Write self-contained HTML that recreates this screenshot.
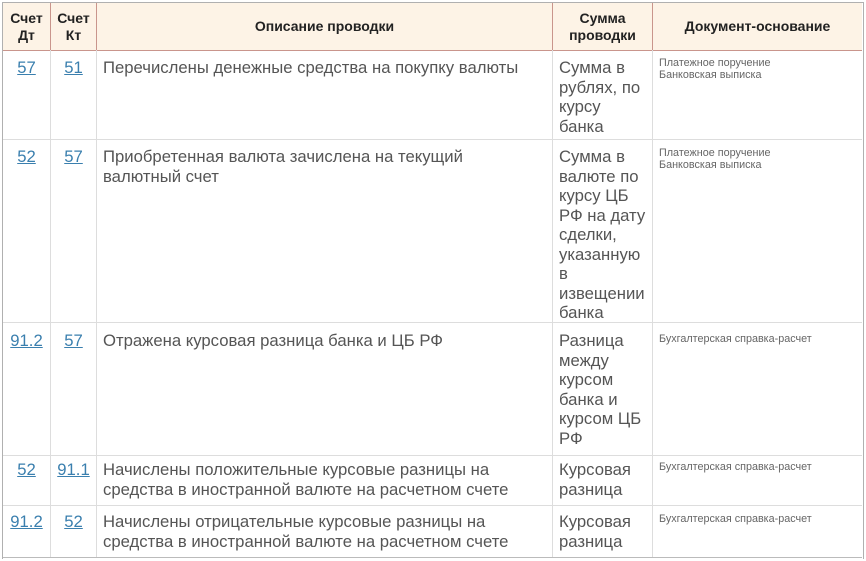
<!DOCTYPE html>
<html><head><meta charset="utf-8"><style>
body{margin:0;width:866px;height:561px;background:#fff;overflow:hidden;font-family:"Liberation Sans",Arial,sans-serif;position:relative}
.frame{position:absolute;left:2px;top:2px;width:860px;height:556px;border:1px solid #b0b0b0;border-bottom:none}
.hd{position:absolute;left:3px;top:3px;width:859px;height:47px;background:#fdf3e6;border-bottom:1px solid #c9958c}
.v{position:absolute;width:1px;background:#ddd}
.vh{position:absolute;top:3px;height:47px;width:1px;background:#c9958c}
.h{position:absolute;left:3px;width:859px;height:1px;background:#ddd}
.t{position:absolute;font-size:16.7px;line-height:19.5px;color:#555;white-space:nowrap}
.th{position:absolute;font-size:14px;font-weight:bold;color:#222;text-align:center;line-height:17px}
a{color:#3a7fae;text-decoration:underline}
.c{text-align:center}
.d{position:absolute;font-size:10.8px;line-height:12px;color:#666}
</style></head><body>
<div class="frame"></div>
<div class="hd"></div>
<div class="vh" style="left:50px"></div><div class="vh" style="left:96px"></div><div class="vh" style="left:552px"></div><div class="vh" style="left:652px"></div>
<div class="v" style="left:50px;top:50px;height:507px"></div>
<div class="v" style="left:96px;top:50px;height:507px"></div>
<div class="v" style="left:552px;top:50px;height:507px"></div>
<div class="v" style="left:652px;top:50px;height:507px"></div>
<div class="h" style="top:139px"></div><div class="h" style="top:322px"></div><div class="h" style="top:455px"></div><div class="h" style="top:505px"></div><div class="h" style="top:557px;background:#bbb"></div>
<div class="th" style="left:3px;width:47px;top:10px">Счет<br>Дт</div>
<div class="th" style="left:51px;width:45px;top:10px">Счет<br>Кт</div>
<div class="th" style="left:97px;width:455px;top:18px">Описание проводки</div>
<div class="th" style="left:553px;width:99px;top:10px">Сумма<br>проводки</div>
<div class="th" style="left:653px;width:209px;top:18px">Документ-основание</div>

<div class="t c" style="left:3px;width:47px;top:58px"><a>57</a></div>
<div class="t c" style="left:51px;width:45px;top:58px"><a>51</a></div>
<div class="t" style="left:103px;top:58px">Перечислены денежные средства на покупку валюты</div>
<div class="t" style="left:559px;top:58px">Сумма в<br>рублях, по<br>курсу<br>банка</div>
<div class="d" style="left:659px;top:57px">Платежное поручение<br>Банковская выписка</div>

<div class="t c" style="left:3px;width:47px;top:147px"><a>52</a></div>
<div class="t c" style="left:51px;width:45px;top:147px"><a>57</a></div>
<div class="t" style="left:103px;top:147px">Приобретенная валюта зачислена на текущий<br>валютный счет</div>
<div class="t" style="left:559px;top:147px">Сумма в<br>валюте по<br>курсу ЦБ<br>РФ на дату<br>сделки,<br>указанную<br>в<br>извещении<br>банка</div>
<div class="d" style="left:659px;top:147px">Платежное поручение<br>Банковская выписка</div>

<div class="t c" style="left:3px;width:47px;top:331px"><a>91.2</a></div>
<div class="t c" style="left:51px;width:45px;top:331px"><a>57</a></div>
<div class="t" style="left:103px;top:331px">Отражена курсовая разница банка и ЦБ РФ</div>
<div class="t" style="left:559px;top:331px">Разница<br>между<br>курсом<br>банка и<br>курсом ЦБ<br>РФ</div>
<div class="d" style="left:659px;top:333px">Бухгалтерская справка-расчет</div>

<div class="t c" style="left:3px;width:47px;top:460px"><a>52</a></div>
<div class="t c" style="left:51px;width:45px;top:460px"><a>91.1</a></div>
<div class="t" style="left:103px;top:460px">Начислены положительные курсовые разницы на<br>средства в иностранной валюте на расчетном счете</div>
<div class="t" style="left:559px;top:460px">Курсовая<br>разница</div>
<div class="d" style="left:659px;top:461px">Бухгалтерская справка-расчет</div>

<div class="t c" style="left:3px;width:47px;top:512px"><a>91.2</a></div>
<div class="t c" style="left:51px;width:45px;top:512px"><a>52</a></div>
<div class="t" style="left:103px;top:512px">Начислены отрицательные курсовые разницы на<br>средства в иностранной валюте на расчетном счете</div>
<div class="t" style="left:559px;top:512px">Курсовая<br>разница</div>
<div class="d" style="left:659px;top:513px">Бухгалтерская справка-расчет</div>
</body></html>
